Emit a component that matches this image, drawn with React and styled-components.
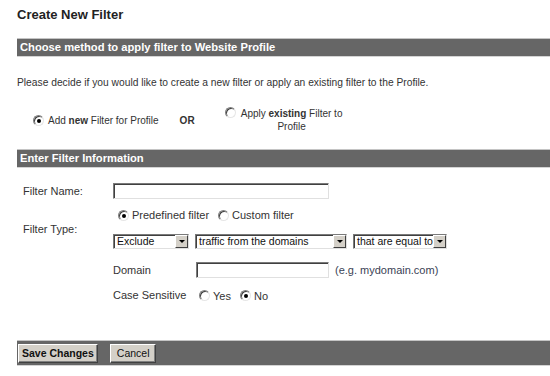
import React from "react";
import styled, { createGlobalStyle, css } from "styled-components";

const GlobalStyle = createGlobalStyle`
  html, body {
    margin: 0;
    padding: 0;
    background: #ffffff;
  }
  body {
    font-family: "Liberation Sans", Arial, sans-serif;
    color: #333333;
  }
`;

const Page = styled.div`
  width: 550px;
  height: 376px;
  padding: 7px 0 0 17px;
  box-sizing: border-box;
  overflow: hidden;
`;

const Title = styled.h1`
  margin: 0 0 16px 0;
  font-size: 13px;
  line-height: 15px;
  font-weight: 700;
  color: #222222;
`;

const SectionBar = styled.div`
  height: 17px;
  line-height: 17px;
  padding-left: 3px;
  background: #666666;
  border-top: 1px solid #c4c4c4;
  border-bottom: 1px solid #d4d4d4;
  color: #ffffff;
  font-size: 11.2px;
  font-weight: 700;
  margin-bottom: ${(p) => p.$gap || 0}px;
`;

const Intro = styled.p`
  margin: 0 0 18px 0;
  font-size: 10.25px;
  line-height: 12px;
`;

const MethodRow = styled.div`
  display: flex;
  align-items: center;
  padding-left: 16px;
  margin-bottom: 16px;
  font-size: 10px;
  line-height: 13px;
`;

const Option = styled.label`
  display: flex;
  align-items: ${(p) => (p.$top ? "flex-start" : "center")};
  gap: 4px;
`;

const OptionText = styled.span`
  text-align: center;
  width: ${(p) => (p.$w ? `${p.$w}px` : "auto")};
`;

const Or = styled.span`
  font-weight: 700;
  margin: 0 30px 0 21px;
`;

const Radio = styled.span`
  flex: none;
  position: relative;
  display: inline-block;
  width: 11px;
  height: 11px;
  border-radius: 50%;
  box-sizing: border-box;
  background: #ffffff;
  border: 1px solid;
  border-color: #808080 #e6e6e6 #e6e6e6 #808080;
  box-shadow: inset 1px 1px 0 #404040;
  ${(p) =>
    p.$checked &&
    css`
      &::after {
        content: "";
        position: absolute;
        left: 3px;
        top: 3px;
        width: 4px;
        height: 4px;
        border-radius: 50%;
        background: #000000;
      }
    `}
`;

const FormGrid = styled.div`
  display: grid;
  grid-template-columns: 90px 1fr;
  align-items: center;
  row-gap: 10px;
  padding: 15px 0 0 6px;
  font-size: 11px;
  line-height: 13px;
  height: 157px;
  align-content: start;
`;

const Label = styled.div`
  grid-row: ${(p) => p.$span || "auto"};
`;

const TextInput = styled.div`
  width: ${(p) => p.$w}px;
  height: 16px;
  box-sizing: border-box;
  border: 1px solid;
  border-color: #7a7a7a #e0e0e0 #e0e0e0 #7a7a7a;
  box-shadow: inset 1px 1px 0 #404040;
  background: #ffffff;
`;

const TypeBlock = styled.div`
  grid-column: 2;
  grid-row: 2 / span 2;
  display: flex;
  flex-direction: column;
  gap: 12px;
`;

const RadioLine = styled.div`
  display: flex;
  align-items: center;
  gap: 3px;
  padding-left: 5px;
`;

const SelectRow = styled.div`
  display: flex;
  gap: 6px;
`;

const Select = styled.div`
  display: flex;
  width: ${(p) => p.$w}px;
  height: 15px;
  box-sizing: border-box;
  border: 1px solid;
  border-color: #7a7a7a #e0e0e0 #e0e0e0 #7a7a7a;
  box-shadow: inset 1px 1px 0 #404040;
  background: #ffffff;
  font-size: 10.5px;
  line-height: 13px;
  color: #111111;
`;

const SelectText = styled.span`
  flex: 1;
  padding: 0 0 0 3px;
  white-space: nowrap;
  overflow: hidden;
`;

const Arrow = styled.span`
  flex: none;
  width: 13px;
  height: 13px;
  box-sizing: border-box;
  background: #d4d0c8;
  border: 1px solid;
  border-color: #ffffff #404040 #404040 #ffffff;
  display: flex;
  align-items: center;
  justify-content: center;
  &::after {
    content: "";
    border-left: 3px solid transparent;
    border-right: 3px solid transparent;
    border-top: 3px solid #000000;
  }
`;

const SubGrid = styled.div`
  grid-column: 2;
  display: grid;
  grid-template-columns: 83px auto 1fr;
  align-items: center;
  row-gap: 9px;
  margin-top: 3px;
`;

const Hint = styled.span`
  padding-left: 6px;
  color: #3a3f55;
`;

const Choices = styled.div`
  display: flex;
  align-items: center;
  gap: 3px;
  padding-left: 3px;
  grid-column: 2 / span 2;
`;

const Choice = styled.span`
  margin-right: ${(p) => (p.$last ? 0 : 6)}px;
  padding-top: ${(p) => p.$drop || 0}px;
`;

const BottomBar = styled.div`
  display: flex;
  align-items: center;
  gap: 12px;
  height: 24px;
  padding-left: 1px;
  background: #666666;
  border-top: 1px solid #c4c4c4;
  border-bottom: 1px solid #d4d4d4;
`;

const Button = styled.button`
  height: 19px;
  padding: 0 ${(p) => (p.$primary ? 3 : 6)}px;
  font-family: "Liberation Sans", Arial, sans-serif;
  font-size: 10.5px;
  font-weight: ${(p) => (p.$primary ? 700 : 400)};
  color: #111111;
  background: #d4d0c8;
  border: 1px solid;
  border-color: #ffffff #404040 #404040 #ffffff;
  box-shadow: inset -1px -1px 0 #808080;
  cursor: pointer;
`;

export default function App() {
  return (
    <>
      <GlobalStyle />
      <Page>
        <Title>Create New Filter</Title>
        <SectionBar $gap={20}>Choose method to apply filter to Website Profile</SectionBar>
        <Intro>
          Please decide if you would like to create a new filter or apply an existing filter to the Profile.
        </Intro>
        <MethodRow>
          <Option>
            <Radio $checked />
            <span>
              Add <b>new</b> Filter for Profile
            </span>
          </Option>
          <Or>OR</Or>
          <Option $top>
            <Radio />
            <OptionText $w={104}>
              Apply <b>existing</b> Filter to Profile
            </OptionText>
          </Option>
        </MethodRow>
        <SectionBar>Enter Filter Information</SectionBar>
        <FormGrid>
          <Label>Filter Name:</Label>
          <TextInput $w={216} />
          <Label $span="2 / span 2">Filter Type:</Label>
          <TypeBlock>
            <RadioLine>
              <Radio $checked />
              <Choice>Predefined filter</Choice>
              <Radio />
              <Choice $last>Custom filter</Choice>
            </RadioLine>
            <SelectRow>
              <Select $w={76}>
                <SelectText>Exclude</SelectText>
                <Arrow />
              </Select>
              <Select $w={152}>
                <SelectText>traffic from the domains</SelectText>
                <Arrow />
              </Select>
              <Select $w={94}>
                <SelectText>that are equal to</SelectText>
                <Arrow />
              </Select>
            </SelectRow>
          </TypeBlock>
          <SubGrid>
            <span>Domain</span>
            <TextInput $w={133} />
            <Hint>(e.g. mydomain.com)</Hint>
            <span>Case Sensitive</span>
            <Choices>
              <Radio />
              <Choice $drop={3}>Yes</Choice>
              <Radio $checked />
              <Choice $drop={2} $last>No</Choice>
            </Choices>
          </SubGrid>
        </FormGrid>
        <BottomBar>
          <Button $primary>Save Changes</Button>
          <Button>Cancel</Button>
        </BottomBar>
      </Page>
    </>
  );
}
